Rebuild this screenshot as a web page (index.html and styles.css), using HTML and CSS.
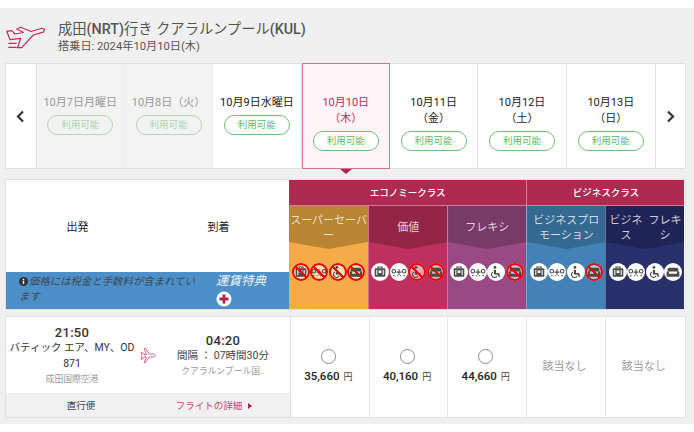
FILE: index.html
```html
<!DOCTYPE html>
<html lang="ja">
<head>
<meta charset="utf-8">
<title>フライト選択</title>
<link rel="stylesheet" href="styles.css">
</head>
<body>
<svg class="defs" width="0" height="0" aria-hidden="true">
  <defs>
    <symbol id="bag" viewBox="0 0 17 17"><path d="M6.500 5V3.800h4V5" fill="none" stroke="currentColor"/><rect x="3.500" y="5" width="10" height="8" rx="1" fill="currentColor"/><rect x="5" y="6.500" width="1" height="5" fill="#fff"/><rect x="11" y="6.500" width="1" height="5" fill="#fff"/><rect x="7.200" y="7" width="2.600" height="2.500" fill="#fff"/></symbol>
    <symbol id="miles" viewBox="0 0 17 17"><circle cx="3.600" cy="7.800" r="1.700" fill="none" stroke="currentColor"/><path d="M2.800 12h1.600M6.200 8.600h4.600M8.500 5.600v6M6.500 12h1M9.500 12h1M12.600 12h1.600" stroke="currentColor" fill="none"/><circle cx="13.400" cy="7.800" r="1.700" fill="none" stroke="currentColor"/></symbol>
    <symbol id="wheel" viewBox="0 0 17 17"><circle cx="7.500" cy="4.200" r="1.300" fill="currentColor"/><path d="M6.500 6.500h2v3h3l1 3.500h-1.500l-.8-2.200H6.500z" fill="currentColor"/><path d="M5.500 8.500a2.800 2.800 0 1 0 4 3.600" fill="none" stroke="currentColor"/></symbol>
    <symbol id="seat" viewBox="0 0 17 17"><path d="M5 4.500h7A1.500 1.500 0 0 1 13.500 6v2h-10V6A1.500 1.500 0 0 1 5 4.500z" fill="currentColor"/><path d="M2.500 8.800a1.100 1.100 0 0 1 2.200 0v1.400h7.600V8.800a1.100 1.100 0 0 1 2.200 0V13h-12z" fill="currentColor"/></symbol>
  </defs>
</svg>
<main class="page">
  <header class="route">
    <svg class="route-plane" width="40" height="22" viewBox="0 0 40 22" fill="none" stroke="#c8285f" stroke-width="1.200" stroke-linejoin="round" aria-hidden="true">
      <path d="M.7 4.300 5.700 3.700 9 7l8.500-1.500L10.700 2l4-1.700L25 4.500l10.700-3.300 3 1-1.400 3L27.300 8 15.700 20.700h-4.200l3.200-9.400-10.700 1.400z"/>
      <path d="M2.300 16.300h8.400M2.300 20.300h8.400"/>
    </svg>
    <div class="route-text">
      <h1 class="route-title">成田<b>(NRT)</b>行き クアラルンプール<b>(KUL)</b></h1>
      <p class="route-date">搭乗日: 2024年10月10日(木)</p>
    </div>
  </header>

  <section class="dates">
    <div class="nav"><svg width="9" height="13" viewBox="0 0 9 13" aria-hidden="true"><path d="M7 1.500 2 6.500l5 5" fill="none" stroke="#333" stroke-width="2.200"/></svg></div>
    <div class="day past"><span class="day-label">10月7日月曜日</span><span class="pill">利用可能</span></div>
    <div class="day past"><span class="day-label">10月8日（火）</span><span class="pill">利用可能</span></div>
    <div class="day"><span class="day-label">10月9日水曜日</span><span class="pill">利用可能</span></div>
    <div class="day current"><span class="day-label">10月10日<br>（木）</span><span class="pill">利用可能</span></div>
    <div class="day"><span class="day-label">10月11日<br>（金）</span><span class="pill">利用可能</span></div>
    <div class="day"><span class="day-label">10月12日<br>（土）</span><span class="pill">利用可能</span></div>
    <div class="day"><span class="day-label">10月13日<br>（日）</span><span class="pill">利用可能</span></div>
    <div class="nav nav-next"><svg width="9" height="13" viewBox="0 0 9 13" aria-hidden="true"><path d="M2 1.500 7 6.500l-5 5" fill="none" stroke="#333" stroke-width="2.200"/></svg></div>
  </section>

  <section class="fares">
    <div class="fares-left">
      <div class="col-heads"><span>出発</span><span>到着</span></div>
      <div class="notice">
        <p class="notice-text"><svg class="info" width="9" height="9" viewBox="0 0 10 10" aria-hidden="true"><circle cx="5" cy="5" r="5" fill="#333"/><rect x="4.200" y="4.200" width="1.600" height="3.600" fill="#fff"/><rect x="4.200" y="2" width="1.600" height="1.500" fill="#fff"/></svg>価格には税金と手数料が含まれています</p>
        <div class="benefit"><span>運賃特典</span><svg width="16" height="16" viewBox="0 0 16 16" aria-hidden="true"><circle cx="8" cy="8" r="7.500" fill="#fff"/><path d="M8 3.500v9M3.500 8h9" stroke="#b0244f" stroke-width="2.800"/></svg></div>
      </div>
    </div>
    <div class="fares-right">
      <div class="classes">
        <div class="class-name eco">エコノミークラス</div>
        <div class="class-name biz">ビジネスクラス</div>
      </div>
      <div class="plans">
        <div class="plan super">
          <div class="plan-head">スーパーセーバー</div>
          <div class="perks">
            <span class="perk no"><svg><use href="#bag"/></svg></span><span class="perk no"><svg><use href="#miles"/></svg></span><span class="perk no"><svg><use href="#wheel"/></svg></span><span class="perk no"><svg><use href="#seat"/></svg></span>
          </div>
        </div>
        <div class="plan value">
          <div class="plan-head">価値</div>
          <div class="perks">
            <span class="perk"><svg><use href="#bag"/></svg></span><span class="perk"><svg><use href="#miles"/></svg></span><span class="perk no"><svg><use href="#wheel"/></svg></span><span class="perk no"><svg><use href="#seat"/></svg></span>
          </div>
        </div>
        <div class="plan flexi">
          <div class="plan-head">フレキシ</div>
          <div class="perks">
            <span class="perk"><svg><use href="#bag"/></svg></span><span class="perk"><svg><use href="#miles"/></svg></span><span class="perk"><svg><use href="#wheel"/></svg></span><span class="perk no"><svg><use href="#seat"/></svg></span>
          </div>
        </div>
        <div class="plan promo">
          <div class="plan-head"><span>ビジネスプロ<br>モーション</span></div>
          <div class="perks">
            <span class="perk"><svg><use href="#bag"/></svg></span><span class="perk"><svg><use href="#miles"/></svg></span><span class="perk"><svg><use href="#wheel"/></svg></span><span class="perk no"><svg><use href="#seat"/></svg></span>
          </div>
        </div>
        <div class="plan bizflex">
          <div class="plan-head"><span class="half">ビジネス</span><span class="half">フレキシ</span></div>
          <div class="perks">
            <span class="perk"><svg><use href="#bag"/></svg></span><span class="perk"><svg><use href="#miles"/></svg></span><span class="perk"><svg><use href="#wheel"/></svg></span><span class="perk"><svg><use href="#seat"/></svg></span>
          </div>
        </div>
      </div>
    </div>
  </section>

  <section class="flight">
    <div class="flight-left">
      <div class="flight-main">
        <div class="dep">
          <strong class="time">21:50</strong>
          <span class="carrier">バティック エア、MY、OD 871</span>
          <span class="airport">成田国際空港</span>
        </div>
        <svg class="mini-plane" width="16" height="17" viewBox="0 0 16 17" fill="none" stroke="#d9658e" stroke-linejoin="round" aria-hidden="true"><path d="M1 5l1.500.5 1.500 2H6.500L4 1.500h1.500l4 5.500H13c1.500 0 2.500.7 2.500 1.500S14.500 10 13 10H9.500l-4 5.500H4L6.500 10H4L2.500 12 1 12.500l1-4z"/></svg>
        <div class="arr">
          <strong class="time">04:20</strong>
          <span class="duration">間隔 ： 07時間30分</span>
          <span class="airport">クアラルンプール国..</span>
        </div>
      </div>
      <div class="flight-foot">
        <span class="direct">直行便</span>
        <span class="details">フライトの詳細<i class="tri"></i></span>
      </div>
    </div>
    <div class="price"><i class="radio"></i><span class="amount">35,660<small>円</small></span></div>
    <div class="price"><i class="radio"></i><span class="amount">40,160<small>円</small></span></div>
    <div class="price"><i class="radio"></i><span class="amount">44,660<small>円</small></span></div>
    <div class="price none">該当なし</div>
    <div class="price none">該当なし</div>
  </section>
</main>
</body>
</html>
```
FILE: styles.css
```css
* { box-sizing: border-box; }
html, body { margin: 0; padding: 0; }
body {
  background: #fff;
  font-family: Roboto, "Noto Sans CJK JP", sans-serif;
  color: #222;
  padding-top: 8px;
  height: 432px;
  overflow: hidden;
}
.defs { position: absolute; }
p, h1 { margin: 0; font-weight: 400; }
.page {
  background: #f0f0f0;
  height: 416px;
  padding: 0 8.5px 0 5px;
  display: flex;
  flex-direction: column;
}
.route {
  height: 55px;
  display: flex;
  align-items: center;
  padding: 3px 0 0 1px;
}
.route-plane { flex: none; margin-right: 12px; margin-top: 1px; }
.route-title { font-size: 14.300px; line-height: 19px; color: #555; white-space: nowrap; }
.route-title b { font-weight: 500; }
.route-date { font-size: 11.200px; line-height: 16px; color: #555; }

.dates {
  height: 106px;
  display: grid;
  grid-template-columns: 30.500px repeat(7, 1fr) 29.500px;
  background: #fff;
  border: 1px solid #e2e2e2;
}
.nav {
  display: flex;
  align-items: center;
  justify-content: center;
  border-right: 1px solid #e2e2e2;
}
.nav-next { border-right: 0; border-left: 1px solid #e2e2e2; }
.day {
  display: flex;
  flex-direction: column;
  align-items: center;
  justify-content: flex-start;
  gap: 4px;
  border-right: 1px solid #e6e6e6;
  font-size: 11px;
  text-align: center;
  padding-top: 30.500px;
}
.day:nth-child(8) { border-right: 0; }
.day-label { line-height: 16px; color: #222; }
.pill {
  width: 66px;
  height: 20px;
  border: 1px solid #6cc072;
  border-radius: 10px;
  color: #5fb868;
  font-size: 9.500px;
  line-height: 18px;
  background: #fff;
}
.past { background: #f3f3f3; border-right-color: #ececec; }
.past .day-label { color: #999; }
.past .pill { opacity: .5; background: transparent; }
.current {
  position: relative;
  background: #fff5f8;
  border: 1px solid #d9729a;
  margin: -1px 0;
  outline: 1px solid #d9729a;
  outline-offset: -1px;
  padding-top: 31px;
}
.current .day-label { color: #c8285f; }
.current::after {
  content: "";
  position: absolute;
  left: 50%;
  bottom: -6px;
  margin-left: -6px;
  border: solid transparent;
  border-width: 5px 6px 0;
  border-top-color: #b0244f;
}

.fares {
  margin-top: 10px;
  height: 131px;
  display: flex;
  border: 1px solid #e2e2e2;
  background: #fff;
}
.fares-left { width: 283px; flex: none; display: flex; flex-direction: column; }
.col-heads {
  flex: 1;
  display: grid;
  grid-template-columns: 141px 141px;
  align-items: center;
  justify-items: center;
  font-size: 11px;
  padding: 0 0 1px 1px;
}
.notice {
  height: 37px;
  background: #4d90c9;
  display: flex;
  font-style: italic;
}
.notice-text {
  width: 210px;
  flex: none;
  padding: 2px 16px 0 13px;
  font-size: 10.400px;
  line-height: 15px;
  color: #3c4a58;
}
.info { vertical-align: -1px; margin-right: 1px; }
.benefit {
  display: flex;
  flex-direction: column;
  align-items: flex-start;
  color: #eef4fa;
  font-size: 12.500px;
  line-height: 17px;
  gap: 2px;
}
.benefit svg { display: block; }
.fares-right { flex: 1; display: flex; flex-direction: column; }
.classes {
  height: 26px;
  display: grid;
  grid-template-columns: 3fr 2fr;
  background: #f0f0f0;
}
.class-name {
  background: #ae2a51;
  color: #fff;
  font-size: 9.500px;
  font-weight: 500;
  text-align: center;
  line-height: 25px;
  border-bottom: 1px solid #d47b97;
}
.biz { border-left: 1px solid #d47b97; }
.plans {
  flex: 1;
  display: grid;
  grid-template-columns: repeat(5, 1fr);
}
.plan {
  position: relative;
  border-left: 1px solid rgba(255,255,255,.3);
  display: flex;
  flex-direction: column;
  min-width: 0;
}
.plan:first-child { border-left: 0; }
.plan-head {
  height: 43px;
  color: rgba(255,255,255,.78);
  font-size: 11px;
  line-height: 15.500px;
  text-align: center;
  display: flex;
  align-items: center;
  justify-content: center;
  padding-top: 1px;
  clip-path: polygon(0 0, 100% 0, 100% 36px, 50% 43px, 0 36px);
  word-break: break-all;
}
.half { flex: 1 1 50%; min-width: 0; padding: 0 2px; }
.perks {
  display: flex;
  justify-content: center;
  gap: .5px;
  margin-top: 14px;
}
.perk {
  position: relative;
  width: 18px;
  height: 18px;
  border-radius: 50%;
  background: #fff;
  color: #4a4a4a;
  display: block;
}
.perk svg { display: block; width: 18px; height: 18px; }
.perk.no { background: rgba(255,255,255,.6); }
.perk.no::after {
  content: "";
  position: absolute;
  inset: 0;
  border-radius: 50%;
  border: 2px solid #ee0000;
  background: linear-gradient(45deg, transparent 43%, #ee0000 43%, #ee0000 57%, transparent 57%);
}
.super { background: #f5ac48; }
.super .plan-head { background: #b98434; }
.value { background: #bf2f5f; }
.value .plan-head { background: #932647; }
.flexi { background: #994983; }
.flexi .plan-head { background: #783a66; }
.promo { background: #4381b7; }
.promo .plan-head { background: #346a91; }
.bizflex { background: #27306b; }
.bizflex .plan-head { background: #1f2456; }

.flight {
  margin-top: 6px;
  height: 102px;
  display: grid;
  grid-template-columns: 285px repeat(5, 1fr);
  border: 1px solid #e2e2e2;
  background: #fff;
}
.flight-left {
  display: flex;
  flex-direction: column;
  border-right: 1px solid #e2e2e2;
}
.flight-main {
  flex: 1;
  display: grid;
  grid-template-columns: 132px 18px 1fr;
  align-items: start;
  text-align: center;
}
.dep, .arr { display: flex; flex-direction: column; align-items: center; }
.dep { padding-top: 7.500px; }
.arr { padding-top: 15.500px; }
.mini-plane { margin-left: 2px; margin-top: 30px; }
.time { font-size: 13px; line-height: 15px; font-weight: 500; color: #333; letter-spacing: .3px; }
.carrier { font-size: 10.500px; line-height: 16px; color: #333; width: 130px; }
.duration { font-size: 10.500px; line-height: 16px; color: #444; white-space: nowrap; }
.airport { font-size: 8.800px; line-height: 14px; color: #999; white-space: nowrap; }
.flight-foot {
  height: 24px;
  background: #f1f1f1;
  display: grid;
  grid-template-columns: 150px 1fr;
  align-items: center;
  justify-items: center;
  font-size: 9.500px;
  padding-right: 5px;
}
.direct { color: #444; }
.details { color: #c8487a; padding-right: 13px; }
.tri {
  display: inline-block;
  margin-left: 6px;
  border: solid transparent;
  border-width: 3px 0 3px 4px;
  border-left-color: #b0244f;
}
.price {
  display: flex;
  flex-direction: column;
  align-items: center;
  padding: 32px 3px 0 0;
  border-right: 1px solid #e6e6e6;
}
.price:last-child { border-right: 0; }
.radio {
  width: 15px;
  height: 15px;
  border: 1px solid #8d8d8d;
  border-radius: 50%;
}
.amount { font-size: 11.500px; font-weight: 500; line-height: 14px; margin-top: 5px; color: #222; }
.amount small { font-size: 9px; font-weight: 400; margin-left: 4px; color: #444; }
.none { font-size: 11px; line-height: 18px; color: #999; padding-top: 41px; }
```
